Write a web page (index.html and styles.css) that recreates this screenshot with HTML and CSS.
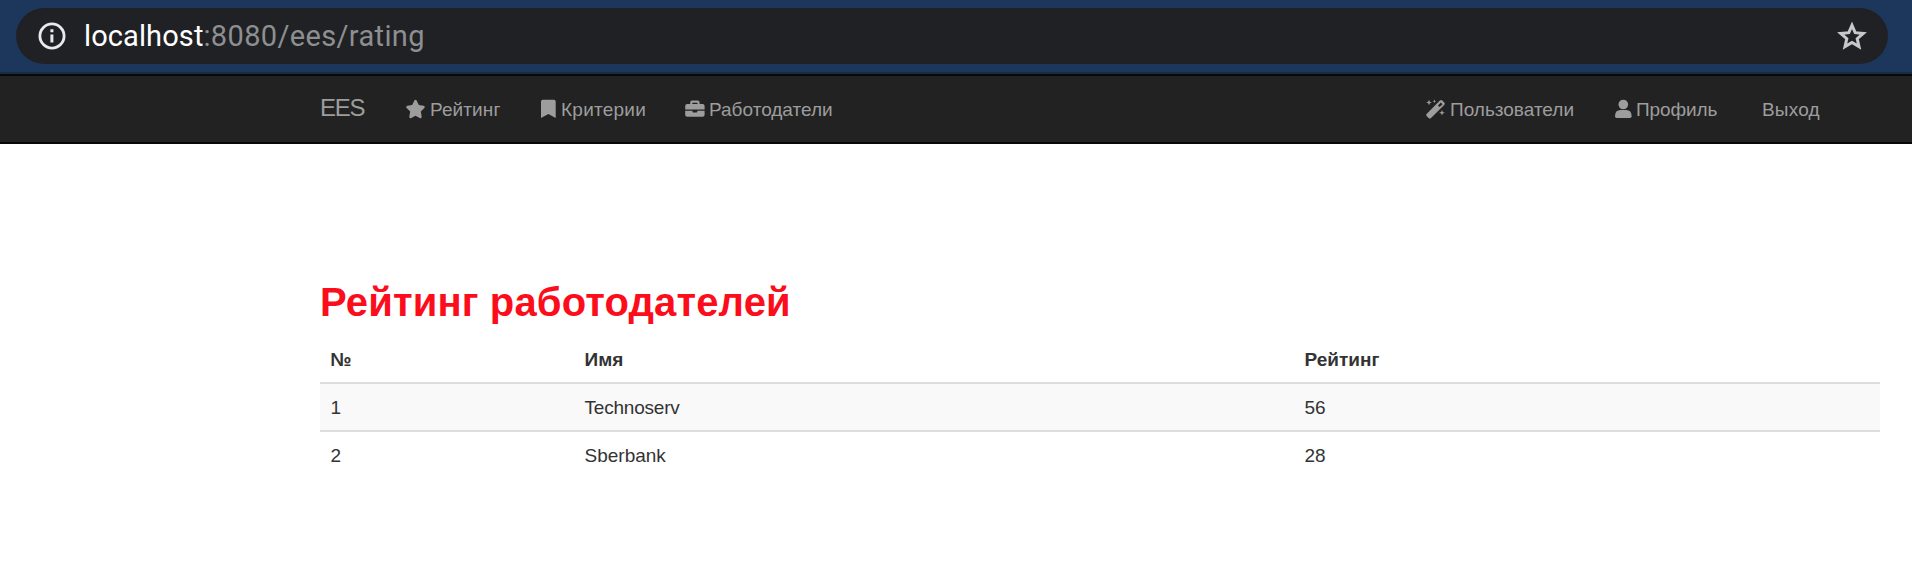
FILE: index.html
```html
<!DOCTYPE html>
<html lang="ru">
<head>
<meta charset="utf-8">
<title>EES</title>
<link rel="stylesheet" href="styles.css">
</head>
<body>
<div class="browser">
  <div class="omnibox">
    <svg class="info" viewBox="0 0 28 28"><circle cx="14" cy="14" r="12.1" fill="none" stroke="#e9eaec" stroke-width="2.8"/><path fill="#e9eaec" d="M12.4 7.3h3v3h-3zM12.4 12.4h3v8.2h-3z"/></svg>
    <div class="url"><span class="host">localhost</span><span class="path">:8080/ees/rating</span></div>
    <svg class="fav" viewBox="0 0 30 30"><path fill="none" stroke="#c6c8ca" stroke-width="3" d="M15 4.300l3.200 7.400 8.100.7-6.100 5.300 1.800 7.900-7-4.200-7 4.200 1.800-7.900-6.100-5.300 8.100-.7z"/></svg>
  </div>
</div>
<nav class="navbar">
  <a class="brand">EES</a>
  <a class="item rating"><svg class="icon" viewBox="0 0 20 20"><path d="M8.700 1.200a1.450 1.450 0 0 1 2.600 0l2.200 4.700 5 .75a1.400 1.400 0 0 1 .8 2.400l-3.700 3.700.9 5.200a1.400 1.400 0 0 1-2.050 1.500L10 17l-4.450 2.450a1.400 1.400 0 0 1-2.050-1.500l.9-5.200L.7 9.050a1.400 1.400 0 0 1 .8-2.400l5-.75z"/></svg><span>Рейтинг</span></a>
  <a class="item criteria"><svg class="icon" viewBox="0 0 15 20"><path d="M0 2.500Q0 .8 1.700.8h11.300q1.700 0 1.700 1.700V19L7.350 14.900 0 19z"/></svg><span>Критерии</span></a>
  <a class="item employers"><svg class="icon" viewBox="0 0 20 20"><path fill-rule="evenodd" d="M5.200 5V3.500q0-1.900 1.900-1.900h5.600q1.900 0 1.900 1.900V5h3q2 0 2 2v3.500H.2V7q0-2 2-2zM7.300 5h5.200V3.700H7.300zM.2 11.700h7.300v1q0 .8.8.8h3.200q.8 0 .8-.8v-1h7.300v4.100q0 2-2 2H2.200q-2 0-2-2z"/></svg><span>Работодатели</span></a>
  <a class="item users"><svg class="icon" viewBox="0 0 20 20"><path fill-rule="evenodd" d="M.8 14.800L13.900 1.600q1.200-1.200 2.400 0l1.900 1.900q1.200 1.200 0 2.400L5 19q-1.200 1.200-2.400 0L.8 17.200q-1.200-1.200 0-2.400zM12 6.500l1.600 1.600 2.900-2.900-1.600-1.600z"/><path d="M3 .7l.8 2 2 .8-2 .8-.8 2-.8-2-2-.8 2-.8zM8.400.4l.5 1.300 1.300.5-1.300.5-.5 1.300-.5-1.300-1.300-.5 1.300-.5zM16 10.900l.8 2 2 .8-2 .8-.8 2-.8-2-2-.8 2-.8z"/></svg><span>Пользователи</span></a>
  <a class="item profile"><svg class="icon" viewBox="0 0 17 20"><circle cx="8.300" cy="5.500" r="4.800"/><path d="M0 17.200q0-6.100 5.500-6.100h5.600q5.500 0 5.500 6.100 0 1.700-1.700 1.700H1.700Q0 18.900 0 17.200z"/></svg><span>Профиль</span></a>
  <a class="item logout"><span>Выход</span></a>
</nav>
<main class="content">
  <h1>Рейтинг работодателей</h1>
  <table>
    <thead><tr><th class="num">№</th><th class="name">Имя</th><th>Рейтинг</th></tr></thead>
    <tbody>
      <tr><td>1</td><td class="tight">Technoserv</td><td>56</td></tr>
      <tr><td>2</td><td>Sberbank</td><td>28</td></tr>
    </tbody>
  </table>
</main>
</body>
</html>
```

FILE: styles.css
```css
* { box-sizing: border-box; }
body {
  margin: 0;
  height: 586px;
  overflow: hidden;
  background: #fff;
  color: #333;
  font-family: "Liberation Sans", Arial, sans-serif;
  font-size: 19px;
}
svg { display: block; flex: none; }
.browser {
  height: 74px;
  padding: 8px 24px 0 16px;
  background: #1d365c;
  border-bottom: 2px solid #172a46;
}
.omnibox {
  display: flex;
  align-items: center;
  height: 56px;
  padding: 0 21px 0 22px;
  border-radius: 28px;
  background: #202124;
}
.info { width: 28px; height: 28px; }
.url {
  margin-left: 18px;
  font: 29px/56px Roboto, sans-serif;
  white-space: nowrap;
}
.host { color: #fff; letter-spacing: .1px; }
.path { color: #8e8f91; letter-spacing: .35px; }
.fav { width: 30px; height: 30px; margin-left: auto; }
.navbar {
  display: flex;
  height: 70px;
  padding-left: 320px;
  border-top: 2px solid #080808;
  border-bottom: 2px solid #080808;
  background: #222;
  color: #9d9d9d;
  line-height: 68px;
  white-space: nowrap;
}
.brand { width: 86px; font-size: 24px; line-height: 64px; letter-spacing: -1.2px; }
.item { display: flex; }
.icon { height: 20px; margin: 23px 5px 0 0; fill: #9d9d9d; }
.rating { width: 135px; letter-spacing: .1px; }
.rating .icon { width: 19px; }
.criteria { width: 144px; letter-spacing: .25px; }
.criteria .icon { margin-right: 5px; }
.employers { width: 741px; }
.employers .icon, .users .icon { margin-right: 4px; }
.users { width: 189px; }
.profile { width: 147px; letter-spacing: -.1px; }
.profile .icon { margin-right: 4px; }
.logout { letter-spacing: .2px; }
.content { padding: 136px 32px 0 320px; }
h1 {
  height: 58px;
  margin: 0;
  color: #fc0d1b;
  font-size: 40px;
  line-height: 44px;
  letter-spacing: .15px;
  white-space: nowrap;
}
table {
  width: 1560px;
  border-collapse: separate;
  border-spacing: 0;
  table-layout: fixed;
}
th, td { height: 48px; padding: 2px 10.5px 0; text-align: left; line-height: 44px; }
th { height: 44px; padding-top: 0; }
td { border-top: 2px solid #ddd; }
tbody tr:first-child td { background: #f9f9f9; }
.tight { letter-spacing: -.2px; }
.num { width: 254px; }
.name { width: 720px; }
```
